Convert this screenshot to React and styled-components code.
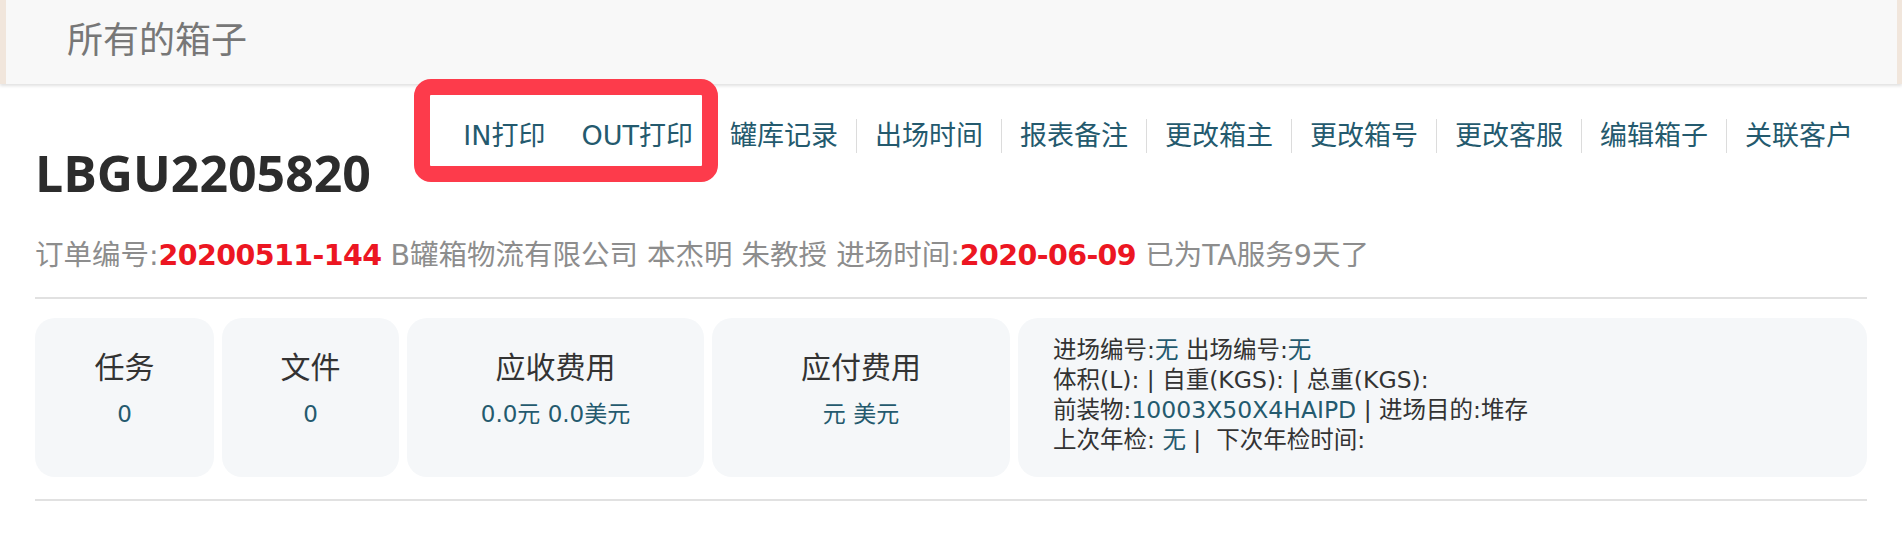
import React from 'react'
import styled, { createGlobalStyle } from 'styled-components'

const GlobalStyle = createGlobalStyle`
  html, body {
    margin: 0;
    padding: 0;
    background: #fff;
  }
  body {
    font-family: "DejaVu Sans", "Noto Sans CJK SC", sans-serif;
  }
`

const links = ['罐库记录', '出场时间', '报表备注', '更改箱主', '更改箱号', '更改客服', '编辑箱子', '关联客户']

const stats = [
  { title: '任务', value: '0' },
  { title: '文件', value: '0' },
  { title: '应收费用', value: '0.0元 0.0美元' },
  { title: '应付费用', value: '元 美元' },
]

function App() {
  return (
    <>
      <GlobalStyle />
      <TopBar>所有的箱子</TopBar>
      <Main>
        <HeaderRow>
          <Title>LBGU2205820</Title>
          <Nav>
            <Marked>
              <NavLink>IN打印</NavLink>
              <NavLink>OUT打印</NavLink>
            </Marked>
            {links.map((l) => (
              <NavLink key={l} divided>{l}</NavLink>
            ))}
          </Nav>
        </HeaderRow>
        <SubLine>
          订单编号:<Hot>20200511-144</Hot> B罐箱物流有限公司 本杰明 朱教授 进场时间:<Hot>2020-06-09</Hot> 已为TA服务9天了
        </SubLine>
        <Rule />
        <Cards>
          {stats.map((s) => (
            <StatCard key={s.title}>
              <StatTitle>{s.title}</StatTitle>
              <StatValue>{s.value}</StatValue>
            </StatCard>
          ))}
          <InfoCard>
            <div>进场编号:<Val>无</Val> 出场编号:<Val>无</Val></div>
            <div>体积(L): | 自重(KGS): | 总重(KGS):</div>
            <div>前装物:<Val>10003X50X4HAIPD</Val> | 进场目的:堆存</div>
            <div>上次年检: <Val>无</Val> |&nbsp;&nbsp;下次年检时间:</div>
          </InfoCard>
        </Cards>
        <Rule $gap={22} />
      </Main>
    </>
  )
}

const TopBar = styled.header`
  height: 84px;
  box-sizing: border-box;
  background: #f8f8f8;
  border-left: 6px solid #f1e6dc;
  border-right: 5px solid #f1e6dc;
  box-shadow: 0 2px 3px rgba(0, 0, 0, 0.12);
  display: flex;
  align-items: center;
  padding: 0 0 10px 61px;
  font-size: 36px;
  color: #777;
`

const Main = styled.main`
  padding: 0 35px;
`

const HeaderRow = styled.div`
  display: flex;
  justify-content: space-between;
  align-items: flex-start;
`

const Title = styled.h1`
  margin: 58px 0 0;
  font-family: "Open Sans", sans-serif;
  font-size: 50px;
  line-height: 62px;
  font-weight: 700;
  color: #2c2c2c;
`

const Nav = styled.nav`
  display: flex;
  margin: 35px -4px 0 0;
`

const Marked = styled.div`
  display: flex;
  position: relative;

  &::after {
    content: '';
    position: absolute;
    top: -40px;
    left: -31px;
    right: -7px;
    bottom: -29px;
    border: 16px solid #fd3b4b;
    border-radius: 17px;
    pointer-events: none;
  }
`

const NavLink = styled.a`
  display: block;
  padding: 0 18px;
  font-size: 27px;
  line-height: 34px;
  color: #245a6e;
  border-left: ${(p) => (p.divided ? '1px solid #dcdcdc' : 'none')};
  cursor: pointer;
`

const SubLine = styled.div`
  margin-top: 32px;
  font-size: 28.5px;
  line-height: 40px;
  color: #8d8d8d;
`

const Hot = styled.b`
  color: #ec1622;
  font-weight: 700;
  letter-spacing: -0.6px;
`

const Rule = styled.hr`
  margin: ${(p) => p.$gap || 21}px 0 0;
  border: none;
  height: 2px;
  background: #e1e1e1;
`

const Cards = styled.div`
  display: grid;
  grid-template-columns: 179px 177px 297px 298px 1fr;
  gap: 8px;
  margin-top: 19px;
`

const StatCard = styled.div`
  height: 159px;
  box-sizing: border-box;
  background: #f5f7f9;
  border-radius: 20px;
  padding-top: 32px;
  text-align: center;
`

const StatTitle = styled.div`
  font-size: 30px;
  line-height: 36px;
  color: #333;
`

const StatValue = styled.div`
  margin-top: 12px;
  font-size: 23px;
  line-height: 32px;
  color: #245a6e;
`

const InfoCard = styled.div`
  height: 159px;
  box-sizing: border-box;
  background: #f5f7f9;
  border-radius: 20px;
  padding: 17px 35px;
  font-size: 23.5px;
  line-height: 30px;
  color: #333;
`

const Val = styled.span`
  color: #245a6e;
`

export default App
